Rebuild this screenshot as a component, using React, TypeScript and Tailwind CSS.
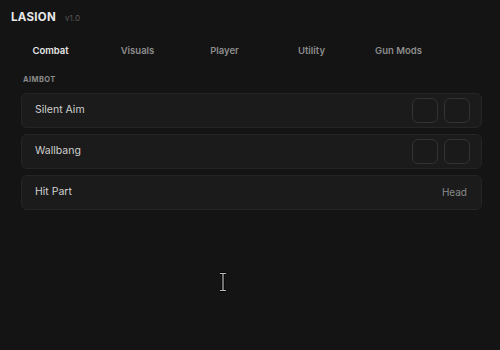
import React from "react";

const tabs = ["Combat", "Visuals", "Player", "Utility", "Gun Mods"];

function Toggle() {
  return (
    <div className="flex gap-[6px]">
      <div className="w-[26px] h-[25px] rounded-[6px] border border-[#333333] bg-[#1a1a1a]" />
      <div className="w-[26px] h-[25px] rounded-[6px] border border-[#333333] bg-[#1a1a1a]" />
    </div>
  );
}

function Row({ label, right }: { label: string; right: React.ReactNode }) {
  return (
    <div className="h-[35px] rounded-[6px] border border-[#252525] bg-[#1b1b1b] flex items-center justify-between pl-[13px] pr-[11px]">
      <span className="text-[10.5px] text-[#cfcfcf]">{label}</span>
      {right}
    </div>
  );
}

export default function App() {
  return (
    <div
      className="relative w-[500px] h-[350px] bg-[#141414] overflow-hidden"
      style={{ fontFamily: "Inter, 'Open Sans', sans-serif" }}
    >
      <div className="flex items-baseline pl-[11px] pt-[9px]">
        <span className="text-[11.5px] font-bold text-[#e8e8e8] tracking-[0.3px]">LASION</span>
        <span className="ml-[9px] text-[8px] text-[#5a5a5a]">v1.0</span>
      </div>
      <div className="flex pl-[7px] mt-[18px]">
        {tabs.map((t, i) => (
          <div
            key={t}
            className={`w-[87px] text-center text-[9.5px] font-semibold ${i === 0 ? "text-[#e6e6e6]" : "text-[#8c8c8c]"}`}
          >
            {t}
          </div>
        ))}
      </div>
      <div className="pl-[23px] mt-[15px] text-[7.5px] font-bold tracking-[0.4px] text-[#8a8a8a]">AIMBOT</div>
      <div className="flex flex-col gap-[6px] mt-[8px] ml-[21px] w-[461px]">
        <Row label="Silent Aim" right={<Toggle />} />
        <Row label="Wallbang" right={<Toggle />} />
        <Row label="Hit Part" right={<span className="text-[10px] text-[#8a8a8a] mr-[3px]">Head</span>} />
      </div>
      <svg className="absolute left-[219px] top-[272px]" width="8" height="20" viewBox="0 0 8 20">
        <path d="M1 1.5h6M1 18.5h6M4 1.5v17" stroke="#000" strokeWidth="3" fill="none" />
        <path d="M1 1.5h6M1 18.5h6M4 1.5v17" stroke="#bdbdbd" strokeWidth="1.2" fill="none" />
      </svg>
    </div>
  );
}
